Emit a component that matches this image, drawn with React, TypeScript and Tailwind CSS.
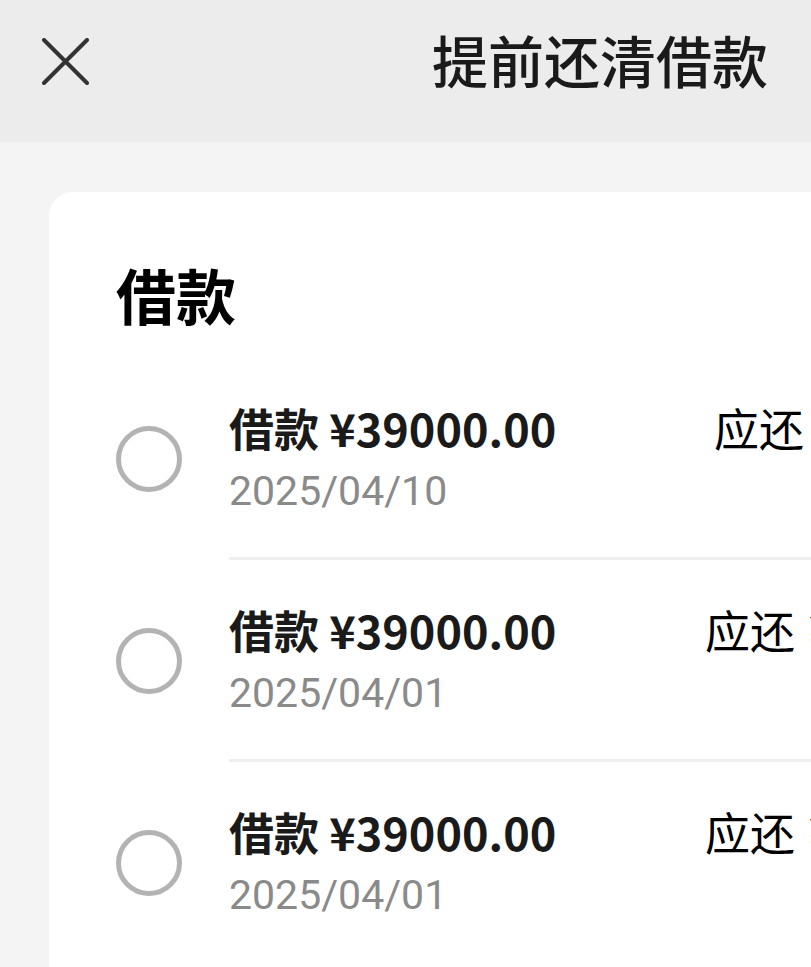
import React from "react";

const rows = [
  { date: "2025/04/10", shift: true },
  { date: "2025/04/01", shift: false },
  { date: "2025/04/01", shift: false },
];

export default function App() {
  return (
    <div
      className="w-[811px] h-[967px] overflow-hidden bg-[#f4f4f4]"
      style={{ fontFamily: '"Noto Sans CJK SC", "Noto Sans", sans-serif' }}
    >
      <header className="h-[142px] bg-[#ececec] flex items-start justify-between pl-[42px] pr-[43px]">
        <svg width="47" height="47" viewBox="0 0 47 47" className="mt-[38px]">
          <path d="M2 2 L45 45 M45 2 L2 45" stroke="#333333" strokeWidth="4" strokeLinecap="round" />
        </svg>
        <h1 className="mt-[31px] text-[56px] leading-none font-medium text-[#1a1a1a]">提前还清借款</h1>
      </header>
      <main className="pt-[50px] pl-[49px]">
        <div className="w-[900px] bg-white rounded-tl-[24px] pl-[67px] pt-[72px] pb-[40px]">
          <h2 className="text-[60px] leading-none font-bold text-black">借款</h2>
          <div className="mt-[34px] flex flex-col">
            {rows.map((r, i) => (
              <div key={i} className="flex items-stretch h-[202px]">
                <div className="w-[113px] flex items-center">
                  <div className="w-[66px] h-[66px] rounded-full border-[5px] border-[#b3b3b3]" />
                </div>
                <div
                  className={
                    i < rows.length - 1
                      ? "flex-1 flex items-center border-b-[3px] border-[#efefef]"
                      : "flex-1 flex items-center border-b-[3px] border-transparent"
                  }
                >
                  <div className="flex items-start">
                    <div className="w-[476px] flex flex-col">
                      <div className="text-[45px] leading-[52px] font-bold text-[#1a1a1a]">借款 ¥39000.00</div>
                      <div
                        className="mt-[14px] text-[41px] leading-[46px] text-[#8a8a8a]"
                        style={{ fontFamily: 'Roboto, "Noto Sans", sans-serif' }}
                      >
                        {r.date}
                      </div>
                    </div>
                    <div className={`text-[45px] leading-[52px] text-black whitespace-nowrap flex ${r.shift ? "ml-[9px]" : ""}`}>
                      <span>应还</span>
                      <span className="ml-[14px]">¥3</span>
                    </div>
                  </div>
                </div>
              </div>
            ))}
          </div>
        </div>
      </main>
    </div>
  );
}
